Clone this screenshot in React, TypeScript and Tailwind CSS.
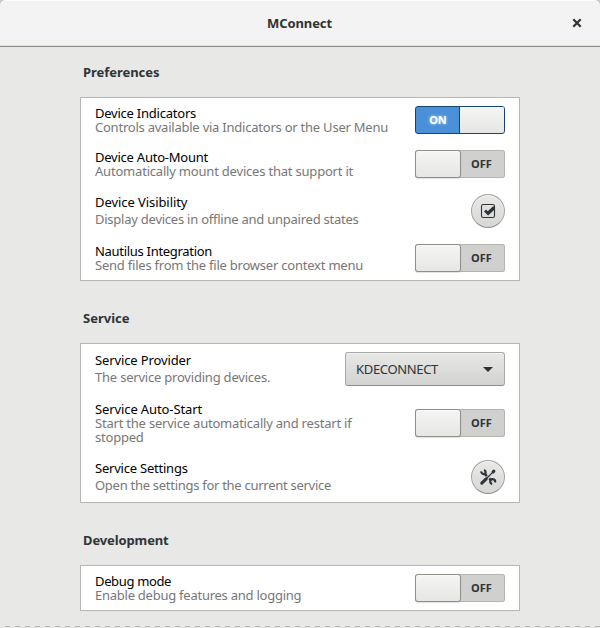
import type { ReactNode } from "react";

function Switch({ on = false }: { on?: boolean }) {
  if (on) {
    return (
      <button className="flex h-7 w-[90px] shrink-0 overflow-hidden rounded-[3px] border border-[#184472] bg-[#4a90d9]">
        <span className="flex flex-1 items-center justify-center pb-[2px] pl-px text-[11px] leading-none font-bold text-white [text-shadow:0_0_3px_rgba(255,255,255,0.7)]">
          ON
        </span>
        <span className="h-[26px] w-[45px] border-l border-[#184472] bg-linear-to-b from-[#f5f5f5] to-[#e6e6e4] shadow-[inset_0_1px_#fafafa]" />
      </button>
    );
  }
  return (
    <button className="flex h-7 w-[90px] shrink-0 rounded-[3px] bg-[#d0d0ce] shadow-[inset_0_0_0_1px_#b4b4b0]">
      <span className="h-7 w-[46px] rounded-[3px] border border-[#8f8f8a] bg-linear-to-b from-[#f5f5f5] to-[#e6e6e4] shadow-[0_1px_1px_rgba(0,0,0,0.12),inset_0_1px_#fafafa]" />
      <span className="flex h-7 flex-1 items-center justify-center pr-[3px] pb-[2px] text-[11px] leading-none font-bold text-[#2e3436]">
        OFF
      </span>
    </button>
  );
}

function RoundButton({ children }: { children: ReactNode }) {
  return (
    <button className="flex size-[34px] shrink-0 items-center justify-center rounded-full border border-[#a3a39f] border-b-[#8f8f8a] bg-linear-to-b from-[#e9e9e7] to-[#d6d6d4] shadow-[inset_0_1px_#f4f4f3]">
      {children}
    </button>
  );
}

function CheckIcon() {
  return (
    <svg width="16" height="16" viewBox="0 0 16 16" fill="none">
      <rect x="1.5" y="1.5" width="13" height="13" rx="1.8" stroke="#2e3436" strokeWidth="1.1" />
      <path d="M4 8.4 6 6.6l1.8 1.7L12.8 3.6h2.1v2.7l-6.8 6.2Z" fill="#2e3436" />
    </svg>
  );
}

function ToolsIcon() {
  return (
    <svg width="18" height="18" viewBox="0 0 18 18" fill="none" stroke="#2e3436">
      <path d="m2.8 15.2 4.4-4.4" strokeWidth="3.1" strokeLinecap="round" />
      <path d="m7.5 10.5 6.4-6.4" strokeWidth="1.3" />
      <path d="m14.2 3.8.6-.6" strokeWidth="3.2" strokeLinecap="round" />
      <path d="m6 6.2 1.9 1.9m2.4 2.3 1.7 1.7" strokeWidth="2.5" />
      <path d="M2.2 3.4a2.5 2.5 0 0 0 4.2 2A2.5 2.5 0 0 0 5 2" strokeWidth="2.2" />
      <path d="M16 14.4a2.5 2.5 0 0 0-4.2-2.5 2.5 2.5 0 0 0 1.4 4.1" strokeWidth="2.2" />
    </svg>
  );
}

type RowProps = {
  title: string;
  titleClass: string;
  desc: string;
  descClass: string;
  rowClass: string;
  children: ReactNode;
};

function Row({ title, titleClass, desc, descClass, rowClass, children }: RowProps) {
  return (
    <div className={`flex items-center justify-between px-[14px] text-[13px] ${rowClass}`}>
      <div className="w-[304px] shrink-0">
        <div className={`whitespace-nowrap text-black ${titleClass}`}>{title}</div>
        <div className={`text-[#777777] ${descClass}`}>{desc}</div>
      </div>
      {children}
    </div>
  );
}

function Section({ title, titleClass, children }: { title: string; titleClass: string; children: ReactNode }) {
  return (
    <section>
      <h2 className={`pl-[3px] text-[13px] leading-[18px] font-bold text-[#2e3436] ${titleClass}`}>{title}</h2>
      <div className="mt-4 border border-[#b6b6b3] bg-white">{children}</div>
    </section>
  );
}

export default function App() {
  return (
    <div className="flex h-[628px] w-[600px] flex-col overflow-hidden bg-[#c9c9c9] font-['Noto_Sans',sans-serif] text-[#2e3436]">
      <header className="grid h-[47px] shrink-0 grid-cols-[40px_1fr_40px] items-center rounded-t-[6px] border-b border-[#8f8f8a] bg-[#f3f3f3] shadow-[inset_0_1px_#fcfcfc,inset_0_-1px_#dededd]">
        <span />
        <h1 className="pt-[2px] pr-px text-center text-[13px] font-bold tracking-[-0.1px]">MConnect</h1>
        <button className="flex justify-center pr-[7px]">
          <svg width="10" height="10" viewBox="0 0 10 10" stroke="#2e3436" strokeWidth="2.2">
            <path d="m1.3 1.3 7.4 7.4m0-7.4L1.3 8.7" />
          </svg>
        </button>
      </header>
      <main className="flex flex-1 flex-col gap-7 bg-[#e8e8e7] px-20 pt-4">
        <Section title="Preferences" titleClass="tracking-[-0.04px]">
          <Row
            title="Device Indicators"
            titleClass="tracking-[-0.23px]"
            desc="Controls available via Indicators or the User Menu"
            descClass="tracking-[-0.23px]"
            rowClass="h-11 leading-[14px]"
          >
            <Switch on />
          </Row>
          <Row
            title="Device Auto-Mount"
            titleClass="tracking-[-0.23px]"
            desc="Automatically mount devices that support it"
            descClass="tracking-[-0.2px]"
            rowClass="h-11 leading-[14px]"
          >
            <Switch />
          </Row>
          <Row
            title="Device Visibility"
            titleClass="tracking-[-0.07px]"
            desc="Display devices in offline and unpaired states"
            descClass="tracking-[-0.24px]"
            rowClass="h-[50px] leading-[17px]"
          >
            <RoundButton>
              <CheckIcon />
            </RoundButton>
          </Row>
          <Row
            title="Nautilus Integration"
            titleClass="tracking-[-0.3px]"
            desc="Send files from the file browser context menu"
            descClass="tracking-[-0.22px]"
            rowClass="h-11 leading-[14px]"
          >
            <Switch />
          </Row>
        </Section>
        <Section title="Service" titleClass="tracking-[0px]">
          <div className="flex h-[50px] items-center justify-between px-[14px] text-[13px] leading-[17px]">
            <div>
              <div className="tracking-[-0.12px] text-black">Service Provider</div>
              <div className="tracking-[-0.21px] text-[#777777]">The service providing devices.</div>
            </div>
            <button className="flex h-[34px] w-40 items-center justify-between rounded-[3px] border border-[#a8a8a4] border-b-[#8f8f8a] bg-linear-to-b from-[#e8e8e7] to-[#d2d2d0] pr-[11px] pl-[10px] shadow-[inset_0_1px_#f2f2f1]">
              <span className="tracking-[-0.33px]">KDECONNECT</span>
              <svg width="10" height="5" viewBox="0 0 10 5" fill="#2e3436">
                <path d="M0 0h10L5 5Z" />
              </svg>
            </button>
          </div>
          <Row
            title="Service Auto-Start"
            titleClass="tracking-[-0.11px]"
            desc="Start the service automatically and restart if stopped"
            descClass="w-[270px] tracking-[-0.21px]"
            rowClass="h-[58px] leading-[14px]"
          >
            <Switch />
          </Row>
          <Row
            title="Service Settings"
            titleClass="tracking-[-0.22px]"
            desc="Open the settings for the current service"
            descClass="tracking-[-0.28px]"
            rowClass="h-[50px] leading-[17px]"
          >
            <RoundButton>
              <ToolsIcon />
            </RoundButton>
          </Row>
        </Section>
        <Section title="Development" titleClass="tracking-[-0.12px]">
          <Row
            title="Debug mode"
            titleClass="tracking-[-0.35px]"
            desc="Enable debug features and logging"
            descClass="tracking-[-0.25px]"
            rowClass="h-11 leading-[14px]"
          >
            <Switch />
          </Row>
        </Section>
      </main>
      <footer className="h-[2px] shrink-0 bg-[#e8e8e7] bg-[repeating-linear-gradient(90deg,#e8e8e7_0_5px,#b6b6b3_5px_10px)] bg-[length:100%_1px] bg-no-repeat" />
    </div>
  );
}
